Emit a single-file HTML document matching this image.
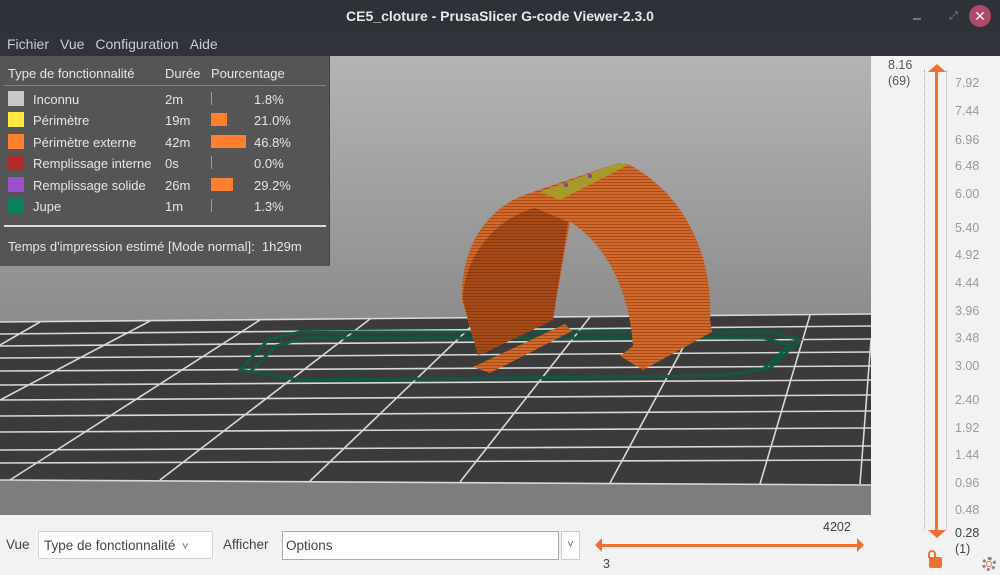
<!DOCTYPE html>
<html><head><meta charset="utf-8"><style>
*{margin:0;padding:0;box-sizing:border-box}
body{width:1000px;height:575px;overflow:hidden;background:#f2f2f2;font-family:"Liberation Sans",sans-serif;position:relative}
.abs{position:absolute}
#title{left:0;top:0;width:1000px;height:32px;background:#2f3139;color:#e8e8e8;font-weight:bold;font-size:14px;text-align:center;line-height:32px}
#menu{left:0;top:32px;width:1000px;height:24px;background:#30333b;color:#c8cdd6;font-size:14px;line-height:24px}
#menu span{margin-left:7px;margin-right:4px}
#canvas{left:0;top:56px;width:871px;height:459px;background:linear-gradient(#b4b4b4,#8e8e8e 55%,#7a7a7a)}
#legend{left:0;top:56px;width:330px;height:210px;background:#555;color:#e6e6e6;font-size:13px;border-right:1px solid #444}
#legend div{position:absolute;white-space:nowrap}
.sw{width:16px;height:15px}
.bar{background:#ff7f2e;height:13px}
.r{color:#999;font-size:12.5px;position:absolute;left:955px}
#bottom{left:0;top:515px;width:871px;height:60px;background:#f2f2f2;font-size:13.5px;color:#444}
</style></head><body>
<div id="title" class="abs">CE5_cloture - PrusaSlicer G-code Viewer-2.3.0</div>
<div class="abs" style="left:913px;top:18px;width:8px;height:2px;background:#777"></div>
<div class="abs" style="left:949px;top:10px;color:#888;font-size:11px">⤢</div>
<div class="abs" style="left:969px;top:5px;width:22px;height:22px;border-radius:50%;background:#b04a6a;color:#fff;font-size:14px;text-align:center;line-height:22px">✕</div>
<div id="menu" class="abs"><span>Fichier</span><span>Vue</span><span>Configuration</span><span>Aide</span></div>
<div id="canvas" class="abs"></div>
<svg class="abs" style="left:0;top:56px" width="871" height="459" viewBox="0 56 871 459">
<defs>
<pattern id="st" width="6" height="3" patternUnits="userSpaceOnUse"><rect width="6" height="3" fill="#cf6a2c"/><rect y="2" width="6" height="1" fill="#a94c18"/></pattern>
<pattern id="st2" width="6" height="3" patternUnits="userSpaceOnUse"><rect width="6" height="3" fill="#a84a18"/><rect y="2" width="6" height="1" fill="#8a3a10"/></pattern>
</defs>
<polygon points="0,322 871,314 871,485 0,480" fill="#3b3b3b"/>
<polygon points="0,480 871,485 871,515 0,515" fill="#7d7d7d"/>
<g stroke="#d8d8d8" stroke-width="1.6" fill="none">
<line x1="0" y1="322" x2="871" y2="314"/><line x1="0" y1="334" x2="871" y2="326"/><line x1="0" y1="346" x2="871" y2="339"/><line x1="0" y1="358" x2="871" y2="352"/><line x1="0" y1="371" x2="871" y2="366"/><line x1="0" y1="385" x2="871" y2="380"/><line x1="0" y1="400" x2="871" y2="395"/><line x1="0" y1="416" x2="871" y2="411"/><line x1="0" y1="432" x2="871" y2="428"/><line x1="0" y1="450" x2="871" y2="446"/><line x1="0" y1="463" x2="871" y2="460"/><line x1="0" y1="480" x2="871" y2="485"/>
<line x1="40" y1="322" x2="0" y2="345"/><line x1="150" y1="321" x2="0" y2="400"/><line x1="260" y1="320" x2="10" y2="480"/><line x1="370" y1="319" x2="160" y2="480"/><line x1="480" y1="318" x2="310" y2="481"/><line x1="590" y1="317" x2="460" y2="482"/><line x1="700" y1="316" x2="610" y2="483"/><line x1="810" y1="315" x2="760" y2="484"/><line x1="871" y1="340" x2="860" y2="484"/>
</g>
<g fill="none" stroke="#0e5a45" stroke-width="3">
<path d="M240,370 L268,340 L300,332 L770,332 L800,340 L770,368 L720,376 L300,380 Z"/>
<path d="M250,372 L276,346 L304,338 L764,338 L790,345 L762,370"/>
</g>
<path d="M478,355 L462,300 C460,245 490,205 530,193 L618,163 L630,165 C685,195 713,255 710,320 L712,332 L643,370 L620,356 L633,346 C630,295 608,245 570,222 L556,300 L553,320 L486,352 Z" fill="url(#st)"/>
<path d="M478,355 L463,300 C463,258 495,218 535,208 L568,222 L556,300 L553,320 L486,352 Z" fill="url(#st2)"/>
<path d="M473,367 L565,324 L572,331 L490,373 Z" fill="url(#st)"/>
<path d="M540,192 L618,163 L628,165 L560,200 Z" fill="#a89a2a"/>
<circle cx="566" cy="185" r="2" fill="#7a3fb0"/><circle cx="590" cy="176" r="2" fill="#7a3fb0"/>
</svg>
<div id="legend" class="abs">
<div style="left:8px;top:10px">Type de fonctionnalité</div><div style="left:165px;top:10px">Durée</div><div style="left:211px;top:10px">Pourcentage</div>
<div style="left:4px;top:29px;width:322px;height:1px;background:#d06a30"></div>
<div class="sw" style="left:8px;top:35px;background:#c8c8c8"></div><div style="left:33px;top:36px">Inconnu</div><div style="left:165px;top:36px">2m</div><div class="bar" style="left:211px;top:36px;width:1px"></div><div style="left:254px;top:36px">1.8%</div>
<div class="sw" style="left:8px;top:56px;background:#ffe640"></div><div style="left:33px;top:57px">Périmètre</div><div style="left:165px;top:57px">19m</div><div class="bar" style="left:211px;top:57px;width:16px"></div><div style="left:254px;top:57px">21.0%</div>
<div class="sw" style="left:8px;top:78px;background:#ff7f2e"></div><div style="left:33px;top:79px">Périmètre externe</div><div style="left:165px;top:79px">42m</div><div class="bar" style="left:211px;top:79px;width:35px"></div><div style="left:254px;top:79px">46.8%</div>
<div class="sw" style="left:8px;top:99px;background:#b02a2a"></div><div style="left:33px;top:100px">Remplissage interne</div><div style="left:165px;top:100px">0s</div><div class="bar" style="left:211px;top:100px;width:1px"></div><div style="left:254px;top:100px">0.0%</div>
<div class="sw" style="left:8px;top:121px;background:#9a52cc"></div><div style="left:33px;top:122px">Remplissage solide</div><div style="left:165px;top:122px">26m</div><div class="bar" style="left:211px;top:122px;width:22px"></div><div style="left:254px;top:122px">29.2%</div>
<div class="sw" style="left:8px;top:142px;background:#0b8060"></div><div style="left:33px;top:143px">Jupe</div><div style="left:165px;top:143px">1m</div><div class="bar" style="left:211px;top:143px;width:1px"></div><div style="left:254px;top:143px">1.3%</div>
<div style="left:4px;top:169px;width:322px;height:2px;background:#ddd"></div>
<div style="left:8px;top:183px">Temps d'impression estimé [Mode normal]:&nbsp; 1h29m</div>
</div>
<div class="abs" style="left:888px;top:57px;font-size:12.5px;color:#555;line-height:16px">8.16<br>(69)</div>
<div class="abs" style="left:935px;top:70px;width:3px;height:462px;background:#f07030"></div>
<div class="abs" style="left:928px;top:64px;width:0;height:0;border-left:9px solid transparent;border-right:9px solid transparent;border-bottom:8px solid #f07030"></div>
<div class="abs" style="left:928px;top:530px;width:0;height:0;border-left:9px solid transparent;border-right:9px solid transparent;border-top:8px solid #f07030"></div>
<div class="abs" style="left:924px;top:70px;width:1px;height:460px;border-left:1px dotted #aaa"></div>
<div class="abs" style="left:946px;top:70px;width:1px;height:460px;border-left:1px dotted #aaa"></div>
<div class="r" style="top:76px">7.92</div><div class="r" style="top:104px">7.44</div><div class="r" style="top:133px">6.96</div><div class="r" style="top:159px">6.48</div><div class="r" style="top:187px">6.00</div><div class="r" style="top:221px">5.40</div><div class="r" style="top:248px">4.92</div><div class="r" style="top:276px">4.44</div><div class="r" style="top:304px">3.96</div><div class="r" style="top:331px">3.48</div><div class="r" style="top:359px">3.00</div><div class="r" style="top:393px">2.40</div><div class="r" style="top:421px">1.92</div><div class="r" style="top:448px">1.44</div><div class="r" style="top:476px">0.96</div><div class="r" style="top:503px">0.48</div>
<div class="abs" style="left:955px;top:525px;font-size:12.5px;color:#444;line-height:16px">0.28<br>(1)</div>
<div class="abs" style="left:929px;top:557px;width:13px;height:11px;background:#f07030;border-radius:2px"></div>
<div class="abs" style="left:931px;top:550px;width:8px;height:8px;border:2px solid #f07030;border-bottom:none;border-radius:4px 4px 0 0;transform:translateX(-3px)"></div>
<div class="abs" style="left:982px;top:557px;width:14px;height:14px;border-radius:50%;border:3px dotted #888"></div>
<div class="abs" style="left:986px;top:561px;width:6px;height:6px;border-radius:50%;border:1px solid #f07030"></div>
<div id="bottom" class="abs">
<div class="abs" style="left:6px;top:22px">Vue</div>
<div class="abs" style="left:38px;top:16px;width:175px;height:28px;background:#fff;border:1px solid #d4d4d4;border-radius:2px;padding:6px 5px;color:#444">Type de fonctionnalité <span style="font-size:11px;color:#666">&nbsp;˅</span></div>
<div class="abs" style="left:223px;top:22px">Afficher</div>
<div class="abs" style="left:282px;top:16px;width:277px;height:29px;background:#fff;border:1px solid #aaa;padding:6px 3px;color:#444">Options</div>
<div class="abs" style="left:561px;top:16px;width:19px;height:29px;background:#fff;border:1px solid #ccc;text-align:center;font-size:11px;line-height:27px;color:#666">˅</div>
<div class="abs" style="left:823px;top:5px;font-size:12.5px;color:#444">4202</div>
<div class="abs" style="left:603px;top:42px;font-size:12.5px;color:#444">3</div>
<div class="abs" style="left:600px;top:29px;width:260px;height:3px;background:#f07030"></div>
<div class="abs" style="left:595px;top:23px;border-top:7px solid transparent;border-bottom:7px solid transparent;border-right:7px solid #f07030"></div>
<div class="abs" style="left:857px;top:23px;border-top:7px solid transparent;border-bottom:7px solid transparent;border-left:7px solid #f07030"></div>
</div>
</body></html>
